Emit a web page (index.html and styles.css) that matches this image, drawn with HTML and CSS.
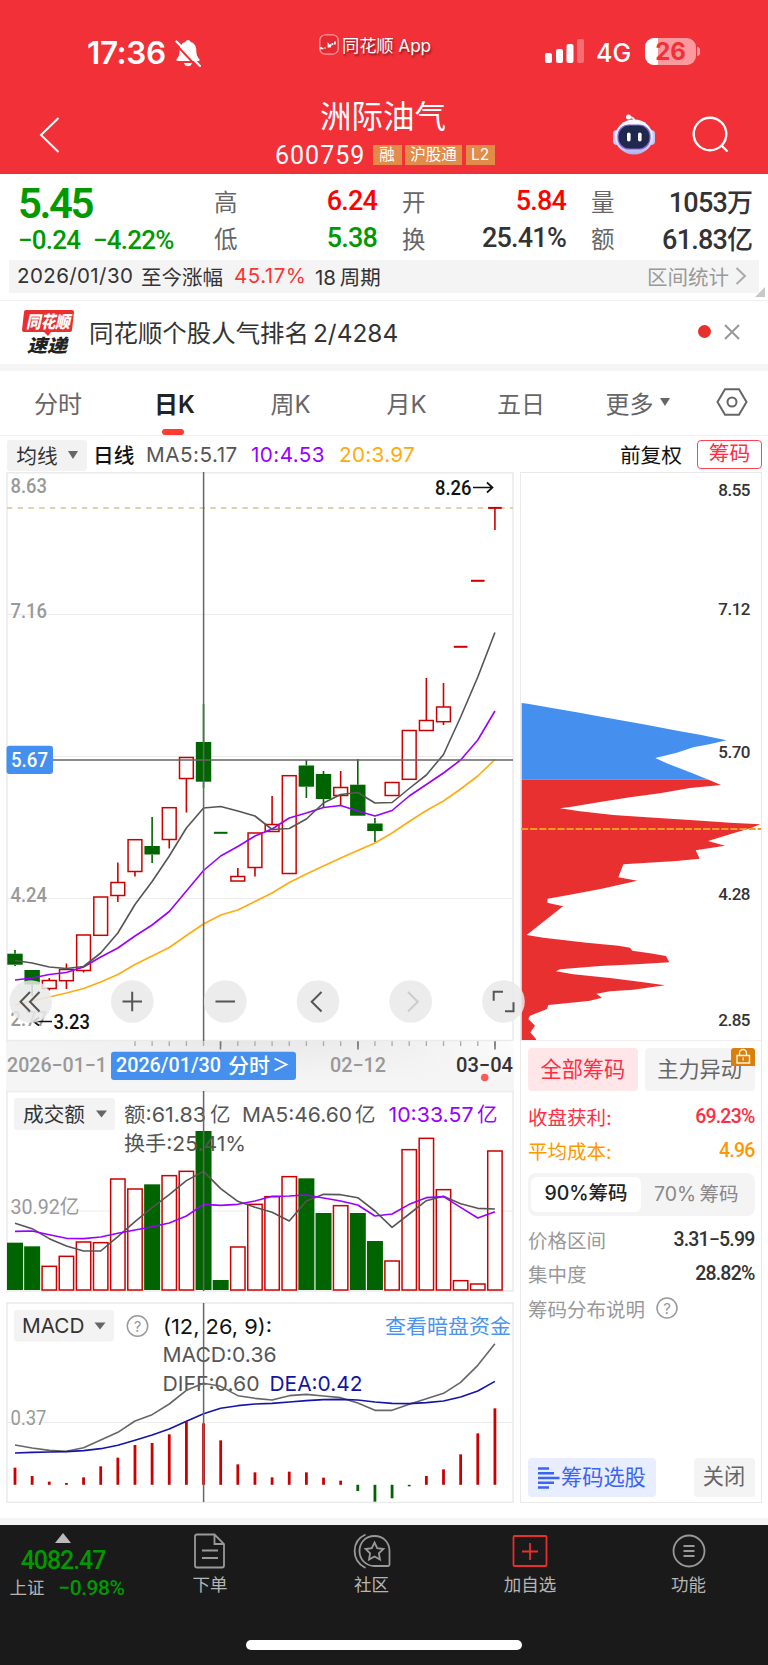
FILE: index.html
```html
<!DOCTYPE html>
<html lang="zh-CN">
<head>
<meta charset="utf-8">
<title>洲际油气 600759</title>
<link rel="stylesheet" href="styles.css">
</head>
<body>
<header class="top">
  <div class="status">
    <span class="clock">17:36</span>
    <svg class="bell" width="26" height="28" viewBox="0 0 26 28"><path fill="#fff" d="M13 1c1.600 0 2.300 1 2.600 2 3.700 1 5.700 4 5.700 8 0 5 1.200 7 3 9 .7 1 .3 2-1 2H2.700c-1.300 0-1.700-1-1-2 1.800-2 3-4 3-9 0-4 2-7 5.700-8C10.700 2 11.400 1 13 1zM9 24h8c-.5 2-2 3.300-4 3.300S9.500 26 9 24z"/><path d="M0 4.500 23 29" stroke="#f03038" stroke-width="2"/><path d="M1.500 2.500 25 27" stroke="#fff" stroke-width="2.200" stroke-linecap="round"/></svg>
    <span class="app-tag"><svg width="20" height="21" viewBox="0 0 20 21"><rect x=".8" y=".8" width="18.400" height="19.400" rx="5.500" fill="#e52a33" stroke="#ff9ba0" stroke-width="1.300"/><path d="M2 13v1.500h2.500M6 14.500v-1M9.500 13.500v-3l1.500 2 1-2M13.500 11V9M16 10.500V7.500" fill="none" stroke="#fff" stroke-width="1.700"/></svg>同花顺 App</span>
    <svg class="signal" width="40" height="25" viewBox="0 0 40 25" fill="#fff"><rect y="14" width="7" height="10" rx="2"/><rect x="11" y="10" width="7" height="14" rx="2"/><rect x="21.500" y="5" width="7" height="19" rx="2"/><rect x="32" width="7" height="24" rx="2" opacity=".3"/></svg>
    <span class="net">4G</span>
    <span class="battery"><span class="level"></span><b>26</b></span><i class="nub"></i>
  </div>
  <div class="title-bar">
    <svg class="back" width="22" height="36" viewBox="0 0 22 36"><path d="M19.500 1 2 18 19.500 35" fill="none" stroke="#fff" stroke-width="2"/></svg>
    <div class="stock">
      <h1>洲际油气</h1>
      <div class="code"><span>600759</span><em>融</em><em class="wide">沪股通</em><em>L2</em></div>
    </div>
    <svg class="robot" width="44" height="42" viewBox="0 0 44 42"><defs><linearGradient id="shell" x2="0" y2="1"><stop stop-color="#fff"/><stop offset=".65" stop-color="#dbe0f7"/><stop offset="1" stop-color="#aab2ee"/></linearGradient></defs><path d="M22 8c1-3-1-5-5-5" fill="none" stroke="#e8eaff" stroke-width="2"/><circle cx="16.500" cy="3" r="2.500" fill="#fff"/><rect x="1" y="16" width="8" height="15" rx="4" fill="#c3c9f5"/><rect x="35" y="16" width="8" height="15" rx="4" fill="#c3c9f5"/><ellipse cx="22" cy="23" rx="19" ry="17.500" fill="url(#shell)"/><rect x="6" y="11" width="32" height="24" rx="11" fill="#20294d" stroke="#8660d8" stroke-width="1.200"/><rect x="15" y="18.500" width="3.600" height="9" rx="1.800" fill="#fff"/><rect x="26" y="18.500" width="3.600" height="9" rx="1.800" fill="#fff"/></svg>
    <svg class="search" width="38" height="38" viewBox="0 0 38 38" fill="none" stroke="#fff" stroke-width="2.400"><circle cx="18" cy="18" r="16.300"/><path d="m29.500 29.500 6 6"/></svg>
  </div>
</header>

<section class="quote">
  <div class="price"><strong>5.45</strong><div><span>−0.24</span><span>−4.22%</span></div></div>
  <dl class="stats">
    <dt>高</dt><dd class="up">6.24</dd><dt>开</dt><dd class="up">5.84</dd><dt>量</dt><dd>1053<i>万</i></dd>
    <dt>低</dt><dd class="down">5.38</dd><dt>换</dt><dd>25.41%</dd><dt>额</dt><dd>61.83<i>亿</i></dd>
  </dl>
</section>
<div class="range"><span class="r-date">2026/01/30</span><span class="r-label">至今涨幅</span><span class="r-pct">45.17%</span><span class="r-len">18 周期</span><span class="r-link">区间统计</span><svg width="12" height="18" viewBox="0 0 12 18"><path d="m1.500 1 8.500 8-8.500 8" fill="none" stroke="#aaa" stroke-width="2"/></svg><i class="corner"></i></div>

<section class="news">
  <svg class="news-logo" width="56" height="46" viewBox="0 0 56 46"><path d="M5 1h46q2 0 2 2l-2 18q0 2-2 2H30l-3 4-4-4H3q-2 0-2-2L3 3q0-2 2-2z" fill="#e83030"/><text x="5" y="18.500" class="logo-a" textLength="44" lengthAdjust="spacingAndGlyphs">同花顺</text><text x="6" y="42.500" class="logo-b" textLength="40" lengthAdjust="spacingAndGlyphs">速递</text></svg>
  <span class="news-text">同花顺个股人气排名 2/4284</span>
  <i class="dot"></i>
  <svg width="16" height="16" viewBox="0 0 16 16"><path d="m1 1 14 14M15 1 1 15" stroke="#999" stroke-width="2"/></svg>
</section>

<nav class="tabs">
  <span>分时</span><span class="on">日K</span><span>周K</span><span>月K</span><span>五日</span><span class="more">更多<i class="tri"></i></span>
  <svg width="32" height="28" viewBox="0 0 32 28" fill="none" stroke="#666" stroke-width="2"><path d="M9 1.200h14L30.500 14 23 26.800H9L1.500 14z"/><circle cx="16" cy="14" r="4.500"/></svg>
</nav>

<div class="ma-row">
  <span class="pill">均线<i class="tri"></i></span><span class="m0">日线</span><span class="m1">MA5:5.17</span><span class="m2">10:4.53</span><span class="m3">20:3.97</span><span class="adj">前复权</span><span class="chip-btn">筹码</span>
</div>

<main class="board">
  <div class="charts">
    <svg id="kline" class="kline" width="520" height="569" viewBox="0 472 520 569">
      <path class="frame" d="M7 1041V472.800H513V1041M7 1040.500H513"/>
      <path class="grid" d="M7 614.500H513M7 756.500H513M7 898.500H513"/>
      <path d="M7 508H513" stroke="#e6cfad" stroke-width="1.800" stroke-dasharray="5.400 5.300"/>
      <g class="axis"><text x="10.500" y="493" textLength="36.500" lengthAdjust="spacingAndGlyphs">8.63</text><text x="10.500" y="617.500" textLength="36.500" lengthAdjust="spacingAndGlyphs">7.16</text><text x="10.500" y="902" textLength="36.500" lengthAdjust="spacingAndGlyphs">4.24</text><text x="10.500" y="1026" textLength="36.500" lengthAdjust="spacingAndGlyphs">2.77</text></g>
      <g id="kdata"></g>
      <g class="mark"><text x="435" y="495" textLength="36.500" lengthAdjust="spacingAndGlyphs">8.26</text><text x="53.500" y="1028.500" textLength="36.500" lengthAdjust="spacingAndGlyphs">3.23</text></g>
      <path d="M473 487.500h19m-5-5 5.500 5-5.500 5M52 1021.500H34m5-4-5.500 4 5.500 4" fill="none" stroke="#111" stroke-width="1.700"/>
      <path class="cross" d="M203.600 472V1041M7 760H513"/>
      <rect x="6.500" y="745.800" width="46.500" height="28.200" rx="3" fill="#4590ee"/>
      <text class="mark inv" x="11" y="766.500" textLength="37" lengthAdjust="spacingAndGlyphs">5.67</text>
      <g fill="#e9e9e9" fill-opacity=".86"><circle cx="30.700" cy="1001.500" r="21.300"/><circle cx="132.300" cy="1001.500" r="21.300"/><circle cx="225.300" cy="1001.500" r="21.300"/><circle cx="318" cy="1001.500" r="21.300"/><circle cx="410.700" cy="1001.500" r="21.300"/><circle cx="503.500" cy="1001.500" r="21.300"/></g>
      <g class="ctl"><path d="m30 992-9.500 9.800L30 1011.500m9.500-19.500-9.500 9.800 9.500 9.700M122.500 1001.500h19.500m-9.800-9.800v19.600M215.500 1001.500h19.500M321.500 992l-9.800 9.800 9.800 9.700M503 991.700h-9.300v9M505 1011.300h8.500v-9"/><path d="m408 992 9.800 9.800-9.800 9.700" stroke="#ccc"/></g>
    </svg>
    <svg class="ruler" width="520" height="50" viewBox="0 1041 520 50">
      <defs><linearGradient id="fade"><stop stop-color="#f4f4f4"/><stop offset=".25" stop-color="#f0f0f0"/><stop offset=".45" stop-color="#e6e6e6"/><stop offset=".8" stop-color="#f0f0f0"/><stop offset="1" stop-color="#fdfdfd"/></linearGradient><linearGradient id="down" x2="0" y2="1"><stop stop-color="#f5f5f5" stop-opacity="0"/><stop offset=".8" stop-color="#f5f5f5"/></linearGradient></defs>
      <rect x="6" y="1041" width="508" height="50" fill="url(#fade)"/><rect x="6" y="1041" width="508" height="50" fill="url(#down)"/>
      <path id="ticks" stroke="#aaa" stroke-width="1.300"/>
      <path d="M220.500 1041v8.500M358 1041v8.500M495 1041v8.500" stroke="#777" stroke-width="1.600"/>
      <g class="axis"><text x="7" y="1072" textLength="100" lengthAdjust="spacingAndGlyphs">2026−01−1</text><text x="330" y="1072" textLength="56" lengthAdjust="spacingAndGlyphs">02−12</text><text x="456" y="1072" fill="#333" textLength="57" lengthAdjust="spacingAndGlyphs">03−04</text></g>
      <rect x="111" y="1051.700" width="185" height="28.300" rx="3" fill="#4590ee"/>
      <text class="mark inv" x="116" y="1072" textLength="105" lengthAdjust="spacingAndGlyphs">2026/01/30</text><text class="mark inv cn" x="228" y="1073" textLength="42">分时</text><path d="m274.500 1058.500 12 6-12 6" fill="none" stroke="#fff" stroke-width="1.800"/>
      <circle cx="484.700" cy="1077.500" r="3.800" fill="#fa5a5a"/>
    </svg>
    <svg class="volume" width="520" height="201" viewBox="0 1091 520 201">
      <rect class="frame" x="7" y="1091.500" width="506" height="199.500"/>
      <path class="grid" d="M7 1211H513"/>
      <rect x="14" y="1098" width="101" height="32" rx="3" fill="#f3f3f3"/>
      <text class="lbl dark" x="23" y="1122" textLength="62" lengthAdjust="spacingAndGlyphs">成交额</text><path d="M96 1110.500h11l-5.500 7z" fill="#666"/>
      <g id="vbars"></g>
      <g class="lbl"><text x="124" y="1122" textLength="82" lengthAdjust="spacingAndGlyphs">额:61.83</text><text x="210" y="1122">亿</text><text x="242" y="1122" textLength="110" lengthAdjust="spacingAndGlyphs">MA5:46.60</text><text x="355" y="1122">亿</text><text x="388.500" y="1122" textLength="85" lengthAdjust="spacingAndGlyphs" fill="#90f">10:33.57</text><text x="477" y="1122" fill="#90f">亿</text><text x="124" y="1151" textLength="122" lengthAdjust="spacingAndGlyphs">换手:25.41%</text></g>
      <text class="axis" x="10.500" y="1213.500" textLength="69" lengthAdjust="spacingAndGlyphs">30.92亿</text>
      <g id="vlines"></g>
      <path class="cross" d="M203.600 1091V1291"/>
    </svg>
    <svg class="macd" width="520" height="201" viewBox="0 1302 520 201">
      <rect class="frame" x="7" y="1303" width="506" height="199.500"/>
      <path class="grid" d="M7 1422.500H513"/>
      <rect x="14" y="1310" width="100" height="31.500" rx="3" fill="#f3f3f3"/>
      <text class="lbl dark" x="22" y="1333" textLength="62.500" lengthAdjust="spacingAndGlyphs">MACD</text><path d="M94.500 1322.500h11l-5.500 7z" fill="#666"/>
      <circle cx="137.500" cy="1326" r="10.200" fill="none" stroke="#999" stroke-width="1.500"/><text class="q" x="137.500" y="1331.500" text-anchor="middle">?</text>
      <g class="lbl"><text x="163" y="1333.500" fill="#111" textLength="109" lengthAdjust="spacingAndGlyphs">(12, 26, 9):</text><text x="162.500" y="1362" textLength="114" lengthAdjust="spacingAndGlyphs">MACD:0.36</text><text x="162.500" y="1391" textLength="97" lengthAdjust="spacingAndGlyphs">DIFF:0.60</text><text x="269.500" y="1391" fill="#1414a0" textLength="93" lengthAdjust="spacingAndGlyphs">DEA:0.42</text><text x="385" y="1333.500" fill="#4a93ee" textLength="126" lengthAdjust="spacingAndGlyphs">查看暗盘资金</text></g>
      <text class="axis" x="10.500" y="1425" textLength="36" lengthAdjust="spacingAndGlyphs">0.37</text>
      <g id="mdata"></g>
      <path class="cross" d="M203.600 1303V1502"/>
    </svg>
  </div>

  <aside class="chips">
    <svg class="profile" width="240" height="568" viewBox="521 472 240 568">
      <g transform="translate(510 680) scale(.33333)"><path fill="#4590ee" d="M35 69 53 71 130 85 200 97 290 113 400 133 510 154 570 164 650 181 598 193 550 202 500 218 436 234 470 250 530 273 596 299H35z"/><path fill="#e83030" d="M35 299H596L633 315 540 324 450 340 360 352 270 366 180 381 150 385 210 394 310 405 410 412 540 420 660 428 751 433 725 443 660 463 594 483 645 497 557 511 569 536 500 543 340 553 325 592 382 602 275 626 180 644 113 656 112 668 159 679 50 765 100 773 230 788 325 797 360 803 367 812 420 820 468 828 478 847 380 853 270 858 150 868 138 874 190 883 300 894 400 907 465 916 370 929 300 934 259 941 276 953 236 963 115 975 111 987 60 1007 55 1017 75 1037 61 1057 78 1077V1081H35z"/></g>
      <path d="M521 829H761" stroke="#f59a23" stroke-width="2" stroke-dasharray="7.300 1.800"/>
      <g class="plabel"><text x="750" y="496">8.55</text><text x="750" y="615">7.12</text><text x="750" y="757.500">5.70</text><text x="750" y="899.500">4.28</text><text x="750" y="1025.500">2.85</text></g>
    </svg>
    <div class="detail">
      <div class="modes"><span class="sel">全部筹码</span><span>主力异动<svg width="24" height="18" viewBox="0 0 24 18"><path d="M3 0h18q3 0 3 3v15H0V3q0-3 3-3z" fill="#da7f0c"/><path d="M8.500 7.500V5a3.500 3.500 0 0 1 7 0v2.500M6 7.500h12.500V15H6zM12.200 9.500v3" fill="none" stroke="#fff3d8" stroke-width="1.400"/></svg></span></div>
      <div class="row red"><span>收盘获利:</span><b>69.23%</b></div>
      <div class="row orange"><span>平均成本:</span><b>4.96</b></div>
      <div class="seg"><span class="act">90%筹码</span><span>70% 筹码</span></div>
      <div class="row gray"><span>价格区间</span><b>3.31−5.99</b></div>
      <div class="row gray"><span>集中度</span><b>28.82%</b></div>
      <div class="row help"><span>筹码分布说明</span><svg width="22" height="22" viewBox="0 0 22 22"><circle cx="11" cy="11" r="10" fill="none" stroke="#999" stroke-width="1.500"/><text class="q" x="11" y="16.500" text-anchor="middle">?</text></svg></div>
      <div class="actions"><span class="pick"><svg width="22" height="22" viewBox="0 0 22 22"><path d="M0 1.500h11M0 6.200h16M0 11h21.500M0 15.800h16M0 20.500h11" stroke="#3b64f5" stroke-width="2.600"/></svg>筹码选股</span><span class="close">关闭</span></div>
    </div>
  </aside>
</main>

<footer class="bar">
  <div class="index"><i></i><strong>4082.47</strong><p>上证<span>−0.98%</span></p></div>
  <div class="item"><svg width="34" height="36" viewBox="0 0 34 36" fill="none" stroke="#999" stroke-width="1.800"><path d="M4 1.500h17.500L31 11v21.500q0 2-2 2H4q-2 0-2-2v-29q0-2 2-2zM21.500 1.500V11H31M9 17.500h16M9 25h16"/></svg>下单</div>
  <div class="item"><svg width="38" height="36" viewBox="0 0 38 36" fill="none" stroke="#999" stroke-width="1.800"><path d="M12.500 1.500C-1.500 8-2.500 27 12.500 35M21.500 3C12 3 6.500 10 6.500 18s6 15 15 15H35q1.500 0 1.500-1.500V18C36.500 10 31 3 21.500 3z"/><path d="m21.500 9.500 2.700 5.700 6.200.8-4.500 4.300 1.100 6.200-5.500-3-5.500 3 1.100-6.200-4.500-4.300 6.200-.8z"/></svg>社区</div>
  <div class="item"><svg width="36" height="36" viewBox="0 0 36 36" fill="none" stroke="#e92e2e" stroke-width="1.800"><rect x="1.500" y="3" width="33" height="30" rx="1"/><path d="M18 10v17M10 18.500h16"/></svg>加自选</div>
  <div class="item"><svg width="36" height="36" viewBox="0 0 36 36" fill="none" stroke="#999" stroke-width="1.800"><circle cx="18" cy="18" r="15.500"/><path d="M12.500 13h11M12.500 18h11M12.500 23h11"/></svg>功能</div>
  <div class="home"></div>
</footer>
<script src="app.js"></script>
</body>
</html>
```
FILE: styles.css
```css
* { box-sizing: border-box; }
body { margin: 0; width: 768px; height: 1665px; overflow: hidden; background: #fff; color: #333; font-family: Inter, "Noto Sans CJK SC", sans-serif; }
i, em { font-style: normal; }
svg { display: block; flex: none; }
span { white-space: nowrap; }

.top { height: 174px; background: #f13038; color: #fff; }
.status { height: 94px; display: flex; align-items: center; padding: 11px 0 0 87px; }
.status > * { flex: none; }
.clock { width: 88px; font-size: 31.500px; font-weight: 600; letter-spacing: -.4px; }
.app-tag { display: flex; gap: 3px; align-items: center; margin: -17px 112px 0 118px; width: 114px; font-size: 17.300px; letter-spacing: -.1px; text-shadow: 1px 2px 2px rgba(80,0,0,.6); }
.signal { margin-top: -2px; }
.net { width: 60px; padding-left: 11px; font-size: 25px; font-weight: 500; }
.battery { position: relative; display: grid; place-items: center; width: 51px; height: 27px; margin-top: -3px; border-radius: 9px; background: #fa9a9e; overflow: hidden; font-size: 24px; line-height: 27px; color: #f13038; }
.battery b { position: relative; }
.level { position: absolute; inset: 0 auto 0 0; width: 13px; background: #fff; }
.nub { width: 3px; height: 9px; margin: -3px 0 0 1px; border-radius: 0 4px 4px 0; background: #fa9a9e; }
.title-bar { height: 80px; display: flex; }
.back { margin: 23px 0 0 39px; }
.stock { width: 300px; margin: 0 77px 0 174px; }
h1 { margin: -2px 0 0 85px; font-size: 31.500px; line-height: 44px; font-weight: 400; font-family: "Noto Sans CJK SC", sans-serif; }
.code { display: flex; align-items: center; gap: 3.500px; height: 32px; padding-left: 40px; margin-top: 3px; }
.code span { width: 94px; font-family: Roboto, sans-serif; font-size: 25px; letter-spacing: 1px; }
.code em { width: 29px; height: 20px; background: #e18c49; font-size: 15.500px; line-height: 19px; text-align: center; }
.code .wide { width: 57px; }
.robot { margin: 20px 0 0; }
.search { margin: 22px 0 0 36px; }

.quote { height: 86px; display: grid; grid-template-columns: 214px 540px; font-family: Roboto, "Noto Sans CJK SC", sans-serif; }
.price { padding: 8px 0 0 18px; color: #090; font-weight: 500; }
.price strong { display: block; font-size: 42px; line-height: 44px; font-weight: 600; letter-spacing: -2.500px; }
.price div { display: flex; gap: 13px; font-size: 26px; line-height: 28px; letter-spacing: -.8px; }
.price div span:first-child { width: 62px; }
.stats { display: grid; grid-template-columns: 48px 115px 74px 115px 74px 113px; grid-template-rows: 37px 37px; margin: 8px 0 0; align-items: center; }
.stats dt { font-size: 23.500px; color: #666; }
.stats dt:nth-of-type(3n+2), .stats dt:nth-of-type(3n) { padding-left: 25px; }
.stats dd { margin: 0; text-align: right; font-size: 27px; font-weight: 500; letter-spacing: -.8px; }
.stats dd i { font-size: 26px; letter-spacing: 0; }
.up { color: #f00; }
.down { color: #090; }
.range { position: relative; display: flex; align-items: center; height: 33px; margin: 0 9px; padding: 0 12px 2px 8px; background: #f4f4f4; font-size: 20.500px; }
.r-date { width: 124px; letter-spacing: .4px; }
.r-label { width: 93px; }
.r-pct { width: 81px; color: #fd3434; letter-spacing: .5px; }
.r-len { word-spacing: -2px; }
.r-link { margin: 0 6px 0 auto; color: #999; }
.corner { position: absolute; right: -6px; bottom: -4px; border: solid transparent; border-width: 0 0 10px 10px; border-bottom-color: #c8c8c8; }
.news { display: flex; align-items: center; height: 64px; margin-top: 7px; border-top: 1px solid #eee; padding: 0 28px 2px 21px; }
.logo-a { font: italic 900 17px "Noto Sans CJK SC", sans-serif; fill: #fff; }
.logo-b { font: italic 900 18px "Noto Sans CJK SC", sans-serif; fill: #222; }
.news-text { margin: -1px 0 0 12px; font-size: 24.400px; }
.news-text { word-spacing: -3px; letter-spacing: .05px; }
.dot { width: 13px; height: 13px; margin: 0 13px 0 auto; border-radius: 50%; background: #e92e2e; }

.tabs { height: 72px; border-top: 7px solid #f5f5f5; border-bottom: 1.500px solid #eee; display: grid; grid-template-columns: 116px 117px 115px 117px 112px 121px 68px; align-items: center; justify-items: center; padding-bottom: 2px; font-size: 24px; color: #666; }
.tabs .on { position: relative; font-weight: 600; color: #222; }
.on::after { content: ""; position: absolute; left: 8px; bottom: -15px; width: 22px; height: 6px; border-radius: 3px; background: #ff3a30; }
.more { display: flex; align-items: center; gap: 6px; }
.tri { width: 0; height: 0; border: solid transparent; border-width: 8px 5.500px 0; border-top-color: #666; }
.ma-row { display: flex; align-items: center; height: 36px; padding: 0 6px 0 7px; font-size: 20.700px; }
.pill { display: flex; align-items: center; justify-content: center; gap: 10px; width: 80px; height: 31px; padding-bottom: 1px; margin-top: 2px; border-radius: 3px; background: #f2f2f2; }
.m0 { width: 53px; margin-left: 6px; font-weight: 500; color: #111; }
.m1 { width: 105px; color: #555; letter-spacing: .5px; }
.m2 { width: 88px; color: #90f; letter-spacing: .4px; }
.m3 { color: #ffab0f; letter-spacing: .3px; }
.adj { margin: 0 15px 0 auto; color: #111; }
.chip-btn { width: 65px; height: 29px; border: 1.500px solid #fb4556; border-radius: 4px; color: #ff2e44; line-height: 26px; text-align: center; }

.board { display: grid; grid-template-columns: 520px 242px; height: 1046px; }
.charts { display: grid; grid-template-rows: 569px 50px 201px 211px; }
.macd { margin-top: 10px; }
.kline { position: relative; z-index: 1; overflow: visible; }
.frame { fill: none; stroke: #ebebeb; stroke-width: 1.600; }
.grid { stroke: #ececec; stroke-width: 1.200; }
.cross { fill: none; stroke: #666; stroke-width: 1.500; }
.ctl { fill: none; stroke: #555; stroke-width: 2; }
.axis { font: 500 20px Roboto, "Noto Sans CJK SC", sans-serif; fill: #999; }
.volume .axis, .macd .axis { font-weight: 400; }
.mark { font: 500 20px Roboto, "Noto Sans CJK SC", sans-serif; fill: #111; }
.inv { fill: #fff; }
.cn { font-size: 21px; }
.lbl { font: 20.500px Inter, "Noto Sans CJK SC", sans-serif; fill: #555; }
.dark { fill: #333; }
.q { font: 15px Inter, sans-serif; fill: #999; }
.plabel { font: 500 17px Roboto, sans-serif; fill: #333; text-anchor: end; letter-spacing: -.5px; }
.line { fill: none; stroke-width: 1.600; stroke-linejoin: round; }

.chips { width: 241.500px; height: 1031px; border: 1px solid #e9e9e9; }
.profile { width: 240px; height: 568px; margin-top: -1px; }
.detail { height: 462px; padding: 7px 6px 5px 7px; border-top: 1px solid #eee; display: flex; flex-direction: column; font-size: 19.500px; }
.modes { display: grid; grid-template-columns: 1fr 1fr; gap: 7px; height: 43px; margin-bottom: 8px; flex: none; font-size: 21.200px; line-height: 24px; }
.modes span { position: relative; display: grid; place-items: center; padding-bottom: 2px; border-radius: 4px; background: #f4f4f4; color: #666; }
.modes .sel { background: #ffe7e9; color: #ff2e44; }
.modes svg { position: absolute; right: 0; top: 0; }
.row { display: flex; align-items: center; justify-content: space-between; height: 34px; flex: none; }
.row b { font: 500 19.500px Roboto, sans-serif; color: #333; letter-spacing: -.8px; }
.row.red, .red b { color: #ff2e44; }
.row.orange, .orange b { color: #ff9800; }
.gray, .help { color: #999; }
.help { justify-content: flex-start; gap: 11px; height: 36px; }
.seg { display: grid; grid-template-columns: 110px 1fr; height: 43px; margin: 6px 0; flex: none; padding: 4px 3px; border-radius: 8px; background: #f4f4f4; color: #888; place-items: center; line-height: 33px; word-spacing: -2px; }
.seg .act { width: 110px; height: 35px; border-radius: 6px; background: #fff; color: #222; font-weight: 500; text-align: center; }
.actions { display: flex; justify-content: space-between; margin-top: auto; height: 39px; font-size: 21.200px; line-height: 37px; }
.actions span { border-radius: 4px; }
.pick { display: flex; align-items: center; gap: 1px; width: 128px; padding-left: 10px; background: #e8edff; color: #3b64f5; }
.close { width: 61px; background: #f4f4f4; color: #666; text-align: center; }

.bar { display: grid; grid-template-columns: 128px 164px 159px 158px 159px; grid-template-rows: 100px 40px; height: 147px; border-top: 7px solid #f4f4f4; background: #1a1a1a; color: #b5b5b5; }
.index { display: flex; flex-direction: column; align-items: center; padding: 8px 2px 0 0; font-family: Roboto, "Noto Sans CJK SC", sans-serif; }
.index i { border: solid transparent; border-width: 0 8px 10px; border-bottom-color: #bbb; }
.index strong { margin-top: 3px; color: #090; font-size: 25px; line-height: 30px; font-weight: 500; letter-spacing: -1.100px; }
.index p { display: flex; gap: 14px; margin: 0 0 0 8px; font-size: 17.500px; line-height: 24px; }
.index p span { color: #090; font-size: 21px; font-weight: 500; letter-spacing: -.5px; }
.item { display: flex; flex-direction: column; align-items: center; gap: 3px; padding-top: 8px; font-size: 17.500px; line-height: 26px; }
.home { grid-column: 1 / -1; width: 276px; height: 10px; margin: 15px auto 0; border-radius: 5px; background: #fff; }
```
FILE: app.js
```js
const RED = '#cc0000', GREEN = '#006400';
const xAt = i => 15 + 17.14 * i;
const rect = (x, y, w, h, up) => up
  ? `<rect x="${x + .8}" y="${y}" width="${w - 1.6}" height="${h}" fill="#fff" stroke="${RED}" stroke-width="1.5"/>`
  : `<rect x="${x}" y="${y}" width="${w}" height="${h}" fill="${GREEN}"/>`;
const stem = (x, a, b, up, w = 1.6) => `<path d="M${x} ${a}V${b}" stroke="${up ? RED : GREEN}" stroke-width="${w}"/>`;
const line = (ys, color) => `<polyline class="line" stroke="${color}" points="${ys.map((y, i) => xAt(i) + ',' + y).join(' ')}"/>`;
const scaled = (list, base) => list.map(v => base + v / 3);

// direction, high, body top, body bottom, low
const candles = [
  [0,950,953.7,964.7,966],[0,970,970,984.5,996],[1,978,980.5,988.5,990.5],[1,963.5,969.5,980.7,989],
  [1,935,935,970.5,972.5],[1,897,897,935.3,936],[1,862.5,882.5,895.5,902],[1,839.5,839.7,871.5,876.5],
  [0,817,846,854.5,863],[1,807.5,807.7,839.5,848.5],[1,757.5,757.5,778.5,812.5],[0,704,742,781.7,788],
  [0,833,832.3,833.8,833],[1,868,876.5,881,881],[1,833,833,867.5,876.5],[1,796,824.5,831.5,831.5],
  [1,775.5,775.7,873.5,873.5],[0,760,765.5,786.7,798],[0,771,774,799,807],[1,771,787.5,795.5,805],
  [0,759,784.7,815.7,815.7],[0,818,823.5,831,842],[1,782.5,782.5,795.5,795.5],[1,730.5,730.5,779.3,780],
  [1,678,720.5,730.5,731],[1,683,707,721.7,725],[1,646.7,646.3,647,646.7],[1,580.7,580.3,581,580.7],[1,507.7,507.4,508,530]
];
const ma5 = [960.5,963,967,968.5,966.5,953,933,904.5,881.5,856,828,808,806.5,811,816,829.5,828.5,819,803,794.5,792.5,803,802.5,788.5,775,754.5,717,677,632.5];
const ma10 = [980,978,974.5,972.5,967,957,948,936,925,911.5,891,870.5,856,846.5,836,829,818,813,807.5,805.5,811,816,810.5,796,784.5,773,760,740,711];
const ma20 = [1005,1001,997,993,988.5,982,974.5,964.5,956,947.5,935.5,924,915,910,901.5,893,882.5,874,866,858,850.5,843,833,821.5,810.5,801,789,776,759.5];
document.getElementById('kdata').innerHTML = candles.map(([up, h, t, b, l], i) => {
  const x = xAt(i);
  if (b - t < 2) return `<path d="M${x - 6.8} ${t + .5}h13.6" stroke="${up ? RED : GREEN}" stroke-width="2"/>` + (l > b + 2 ? stem(x, b, l, up) : '');
  return stem(x, h, t, up) + stem(x, b, l, up) + rect(x - 7.7, t, 15.4, b - t, up);
}).join('') + line(ma20, '#ffab0f') + line(ma10, '#9900ff') + line(ma5, '#555');

let ticks = '';
for (let i = 7; i < 29; i++) ticks += `M${xAt(i)} 1041v5`;
document.getElementById('ticks').setAttribute('d', ticks);

const volume = scaled([638,649,709,679,636,638,447,477,463,437,424,303,750,651,523,500,440,445,549,527,549,633,693,359,325,479,752,762,363], 1030);
const falling = new Set([0, 1, 8, 11, 12, 17, 18, 20, 21]);
document.getElementById('vbars').innerHTML = volume.map((y, i) => rect(xAt(i) - 8, y, 16, 1290 - y, !falling.has(i))).join('');
document.getElementById('vlines').innerHTML =
  line(scaled([580,596,626,648,663,663,620,575,533,494,452,424,476,514,532,547,573,513,493,494,503,543,592,552,512,499,521,535,537], 1030), '#555') +
  line(scaled([604,603,614,625,626,621,610,600,590,579,558,523,526,523,513,499,498,495,504,513,525,558,552,523,503,500,532,564,545], 1030), '#9900ff');

const hist = scaled([518,543,560,564,547,514,488,450,444,418,380,385,436,508,532,547,530,532,548,557,588,620,610,574,543,523,478,415,340], 1295);
document.getElementById('mdata').innerHTML =
  hist.map((y, i) => stem(xAt(i), y, 1484.8, y < 1484.8, 2.8)).join('') +
  line(scaled([450,459,466,469,458,435,412,378,359,327,286,265,274,302,310,315,302,298,303,308,324,346,346,328,311,295,262,211,146], 1295), '#666') +
  line(scaled([474,472,471,470,467,461,451,436,420,402,379,356,340,332,327,325,321,317,314,313,315,321,325,326,323,318,306,288,259], 1295), '#1414a8');
```
